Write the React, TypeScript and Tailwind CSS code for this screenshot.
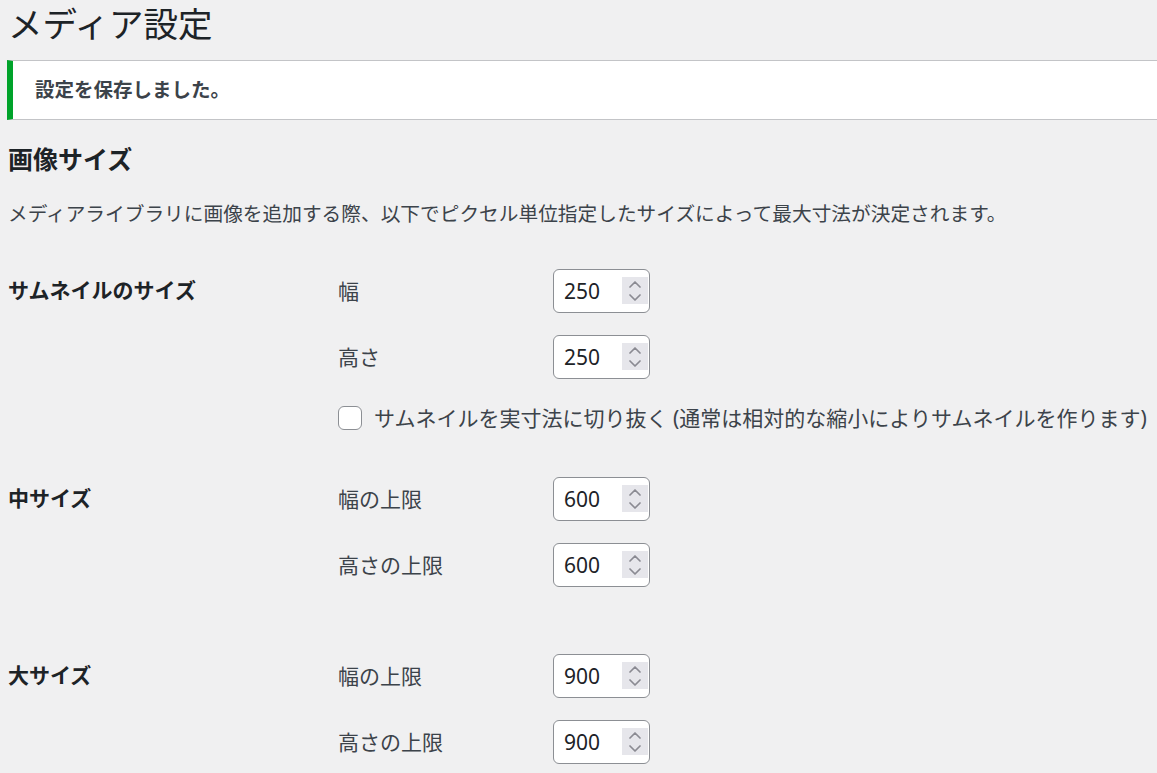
import React from 'react';

const font = { fontFamily: '"Noto Sans", "Noto Sans CJK JP", sans-serif' };

const NumberField: React.FC<{ value: string }> = ({ value }) => (
  <div className="relative w-[97px] h-[44px] rounded-[6px] border border-[#8c8f94] bg-white flex items-center">
    <span className="pl-[10px] text-[21px] leading-[28px] text-[#1d2327]">{value}</span>
    {/* spin button */}
    <div className="absolute right-[1px] top-[7px] w-[26px] h-[27px] bg-[#e6e6eb] flex flex-col items-center justify-center gap-[6px]">
      <svg width="12" height="7" viewBox="0 0 12 7" fill="none">
        <path d="M1 6L6 1L11 6" stroke="#8a8a92" strokeWidth="1.7" strokeLinecap="round" strokeLinejoin="round" />
      </svg>
      <svg width="12" height="7" viewBox="0 0 12 7" fill="none">
        <path d="M1 1L6 6L11 1" stroke="#8a8a92" strokeWidth="1.7" strokeLinecap="round" strokeLinejoin="round" />
      </svg>
    </div>
  </div>
);

const FieldLine: React.FC<{ label: string; value: string; className?: string }> = ({ label, value, className }) => (
  <div className={'flex items-center h-[44px] ' + (className || '')}>
    <span className="w-[215px] text-[21px] leading-[28px] text-[#3c434a]">{label}</span>
    <NumberField value={value} />
  </div>
);

const App: React.FC = () => {
  return (
    <div className="min-h-screen bg-[#f0f0f1] pl-[7px] overflow-hidden text-[#3c434a]" style={font}>
      <h1 className="pt-[1px] text-[34.5px] leading-[46px] font-normal text-[#1d2327] pl-[1px]">メディア設定</h1>

      {/* notice */}
      <div className="mt-[13px] h-[60px] bg-white border-y border-[#c3c4c7] border-l-[6px] border-l-[#00a32a] flex items-center pl-[22px]">
        <p className="text-[19.5px] leading-[28px] font-bold text-[#3c434a]">設定を保存しました。</p>
      </div>

      <h2 className="mt-[24px] pl-[1px] text-[25px] leading-[30px] font-bold text-[#1d2327]">画像サイズ</h2>
      <p className="mt-[26px] pl-[1px] text-[19.7px] leading-[28px] text-[#3c434a]">
        メディアライブラリに画像を追加する際、以下でピクセル単位指定したサイズによって最大寸法が決定されます。
      </p>

      {/* thumbnail */}
      <div className="mt-[41px] flex">
        <div className="w-[331px] h-[44px] flex items-center pl-[1px] text-[21px] font-bold text-[#1d2327]">サムネイルのサイズ</div>
        <div>
          <FieldLine label="幅" value="250" />
          <FieldLine label="高さ" value="250" className="mt-[22px]" />
          <label className="mt-[24px] h-[30px] flex items-center whitespace-nowrap">
            <span className="w-[24px] h-[24px] rounded-[6px] border border-[#8c8f94] bg-white shrink-0" />
            <span className="ml-[12px] text-[21px] leading-[28px] text-[#3c434a]">
              サムネイルを実寸法に切り抜く (通常は相対的な縮小によりサムネイルを作ります)
            </span>
          </label>
        </div>
      </div>

      {/* medium */}
      <div className="mt-[44px] flex">
        <div className="w-[331px] h-[44px] flex items-center pl-[1px] text-[21px] font-bold text-[#1d2327]">中サイズ</div>
        <div>
          <FieldLine label="幅の上限" value="600" />
          <FieldLine label="高さの上限" value="600" className="mt-[22px]" />
        </div>
      </div>

      {/* large */}
      <div className="mt-[67px] flex">
        <div className="w-[331px] h-[44px] flex items-center pl-[1px] text-[21px] font-bold text-[#1d2327]">大サイズ</div>
        <div>
          <FieldLine label="幅の上限" value="900" />
          <FieldLine label="高さの上限" value="900" className="mt-[22px]" />
        </div>
      </div>
    </div>
  );
};

export default App;
